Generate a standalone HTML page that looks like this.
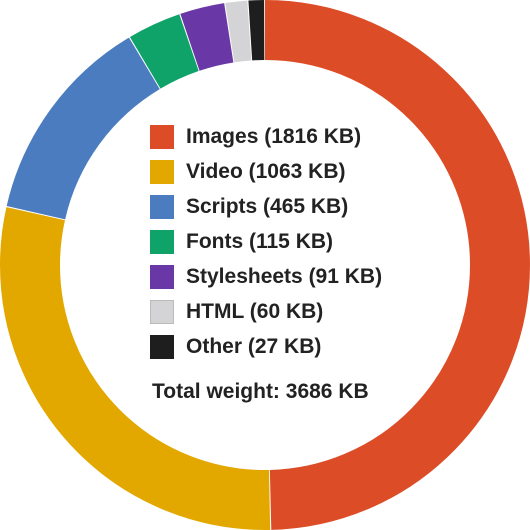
<!DOCTYPE html>
<html><head><style>
body{margin:0;width:530px;height:530px;background:#fff;overflow:hidden;position:relative;font-family:"Liberation Sans",sans-serif;}
.r{position:absolute;left:150px;height:24px;font-size:21px;font-weight:bold;color:#222;line-height:24px;white-space:nowrap}
.r i{display:inline-block;width:24px;height:24px;vertical-align:top;margin-right:12px}
</style></head><body>
<svg width="530" height="530" style="position:absolute;left:0;top:0">
<g transform="rotate(-90 265 265)" fill="none" stroke-width="60">
<circle cx="265" cy="265" r="235" stroke="#dc4c27" stroke-dasharray="732.5 2000" stroke-dashoffset="0"/>
<circle cx="265" cy="265" r="235" stroke="#e2a800" stroke-dasharray="425.5 2000" stroke-dashoffset="-733.5"/>
<circle cx="265" cy="265" r="235" stroke="#4a7cbf" stroke-dasharray="189.6 2000" stroke-dashoffset="-1160"/>
<circle cx="265" cy="265" r="235" stroke="#0fa36a" stroke-dasharray="48.3 2000" stroke-dashoffset="-1350.6"/>
<circle cx="265" cy="265" r="235" stroke="#6a38a6" stroke-dasharray="40 2000" stroke-dashoffset="-1399.9"/>
<circle cx="265" cy="265" r="235" stroke="#d4d4d6" stroke-dasharray="19.6 2000" stroke-dashoffset="-1440.9"/>
<circle cx="265" cy="265" r="235" stroke="#1e1e1e" stroke-dasharray="14 2000" stroke-dashoffset="-1461.5"/>
</g>
</svg>
<div class="r" style="top:125px"><i style="background:#dc4c27"></i>Images (1816 KB)</div>
<div class="r" style="top:160px"><i style="background:#e2a800"></i>Video (1063 KB)</div>
<div class="r" style="top:195px"><i style="background:#4a7cbf"></i>Scripts (465 KB)</div>
<div class="r" style="top:230px"><i style="background:#0fa36a"></i>Fonts (115 KB)</div>
<div class="r" style="top:265px"><i style="background:#6a38a6"></i>Stylesheets (91 KB)</div>
<div class="r" style="top:300px"><i style="background:#d4d4d6;box-shadow:inset 0 0 0 1px #bbb"></i>HTML (60 KB)</div>
<div class="r" style="top:335px"><i style="background:#1e1e1e"></i>Other (27 KB)</div>
<div class="r" style="top:380px;left:152px;font-size:21px">Total weight: 3686 KB</div>
</body></html>
